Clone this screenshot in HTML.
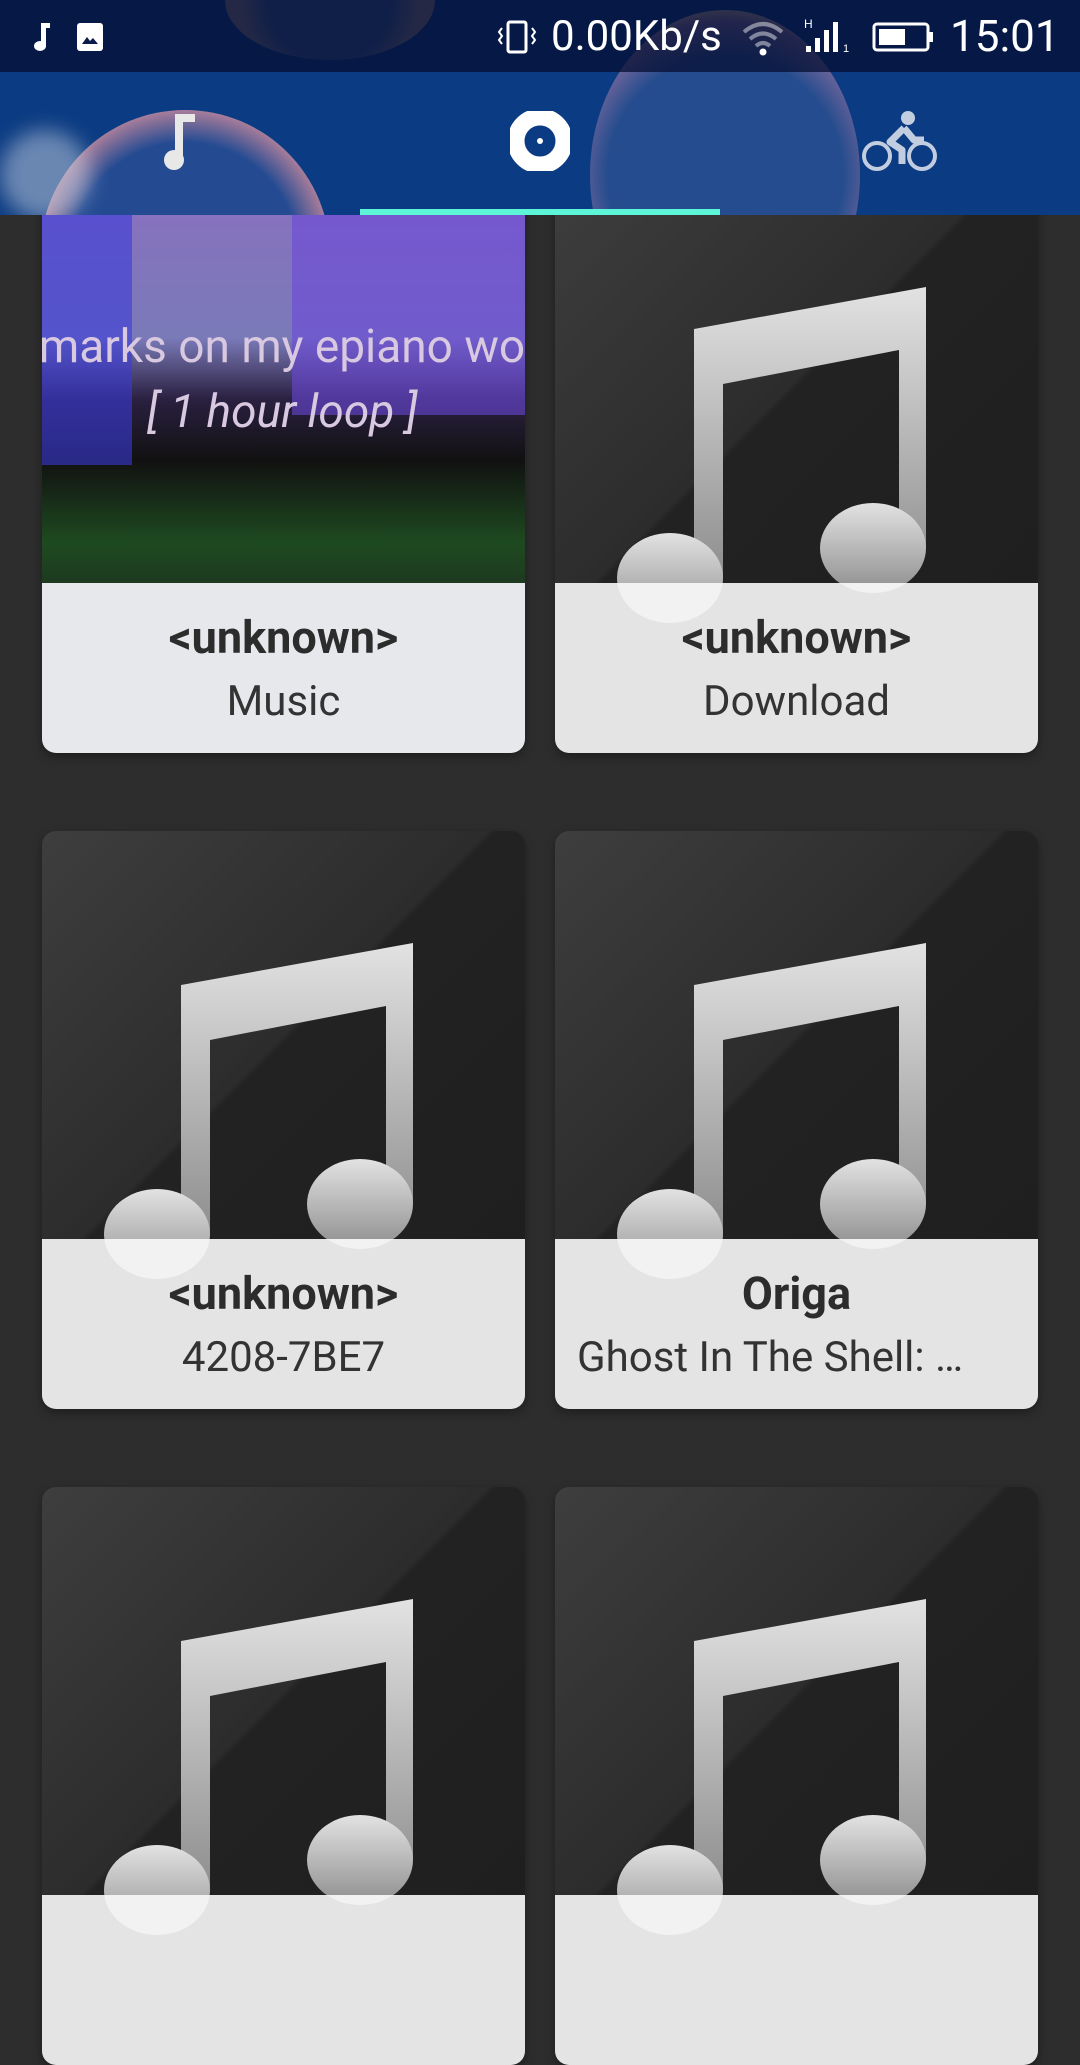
<!DOCTYPE html>
<html><head><meta charset="utf-8"><style>
*{margin:0;padding:0;box-sizing:border-box}
body{width:1080px;height:1920px;overflow:hidden;background:#2d2d2d;font-family:"Roboto","Liberation Sans",sans-serif;position:relative}
.hdr{position:absolute;left:0;top:0;width:1080px;height:215px;background:#0b3b82;overflow:hidden;z-index:5}
.sb{position:absolute;left:0;top:0;width:1080px;height:72px;background:rgba(5,15,50,0.75)}
.card{position:absolute;width:483px;height:578px;border-radius:14px;overflow:hidden;box-shadow:0 4px 10px rgba(0,0,0,.35)}
.img{position:absolute;left:0;top:0;width:483px;height:408px;background:linear-gradient(135deg,#3e3e3e 0%,#2c2c2c 50%,#222 51%,#1f1f1f 100%)}
.txt{position:absolute;left:0;top:408px;width:483px;height:170px;background:#e4e4e4}
.t1{position:absolute;left:0;width:483px;top:28px;text-align:center;font-weight:bold;font-size:45px;color:#2c2c2c}
.t2{position:absolute;left:0;width:483px;top:94px;text-align:center;font-size:42px;color:#333}
.note{position:absolute;left:0;top:0}
</style></head><body>
<div class="hdr">
 <div style="position:absolute;left:40px;top:110px;width:290px;height:290px;border-radius:50%;background:radial-gradient(circle,#2a4f96 55%,#c88aa0 70%,#e6c9b5 76%,#7b8bc0 85%);opacity:.8"></div>
 <div style="position:absolute;left:590px;top:10px;width:270px;height:330px;border-radius:50%;background:radial-gradient(circle,#284f90 55%,#8a6fa0 72%,#d8b59a 78%,#3a5a9a 86%);opacity:.85"></div>
 <div style="position:absolute;left:225px;top:-60px;width:210px;height:120px;border-radius:50%;background:radial-gradient(circle,#3a5a90 50%,#b89080 75%);opacity:.7"></div>
 <div style="position:absolute;left:0;top:130px;width:90px;height:90px;border-radius:50%;background:#c9d3e3;opacity:.5;filter:blur(10px)"></div>
 <div class="sb"></div>
 <svg style="position:absolute;left:30px;top:22px" width="24" height="30"><rect x="11" y="1" width="5" height="24" fill="#fff"/><rect x="11" y="1" width="9" height="5" fill="#fff"/><ellipse cx="10" cy="24" rx="6" ry="5" fill="#fff"/></svg>
 <svg style="position:absolute;left:76px;top:22px" width="28" height="30"><rect x="1" y="1" width="26" height="28" rx="3" fill="#fff"/><path d="M6 22 L11 15 L14 19 L17 16 L22 22 Z" fill="#0a1a4a"/></svg>
 <svg style="position:absolute;left:497px;top:20px" width="44" height="36"><rect x="11" y="2" width="18" height="30" rx="2" fill="none" stroke="#fff" stroke-width="3"/><path d="M5 8 l-3 4 3 4 -3 4 3 4 M35 8 l3 4 -3 4 3 4 -3 4" stroke="#fff" stroke-width="2" fill="none"/></svg>
 <div style="position:absolute;left:551px;top:12px;color:#fff;font-size:42px">0.00Kb/s</div>
 <svg style="position:absolute;left:740px;top:20px" width="46" height="36"><path d="M4 12 Q23 -4 42 12 M10 19 Q23 8 36 19 M16 26 Q23 20 30 26" stroke="rgba(255,255,255,.45)" stroke-width="4" fill="none"/><circle cx="23" cy="32" r="3.5" fill="#fff"/></svg>
 <svg style="position:absolute;left:804px;top:18px" width="50" height="36"><text x="0" y="10" fill="#fff" font-size="12" font-family="Liberation Sans">H</text><rect x="2" y="28" width="5" height="6" fill="#fff"/><rect x="11" y="20" width="5" height="14" fill="#fff"/><rect x="20" y="12" width="5" height="22" fill="#fff"/><rect x="29" y="4" width="5" height="30" fill="#fff"/><text x="39" y="34" fill="#fff" font-size="11" font-family="Liberation Sans">1</text></svg>
 <svg style="position:absolute;left:872px;top:22px" width="64" height="32"><rect x="2" y="2" width="54" height="26" rx="3" fill="none" stroke="#fff" stroke-width="3"/><rect x="7" y="7" width="26" height="16" fill="#fff"/><rect x="57" y="10" width="4" height="10" fill="#fff"/></svg>
 <div style="position:absolute;left:950px;top:10px;color:#fff;font-size:44px">15:01</div>
 <svg style="position:absolute;left:158px;top:112px" width="45" height="60"><rect x="17" y="2" width="8" height="50" fill="#e8e8e8"/><rect x="17" y="2" width="20" height="8" fill="#e8e8e8"/><ellipse cx="16" cy="48" rx="10" ry="10" fill="#e8e8e8"/></svg>
 <svg style="position:absolute;left:510px;top:111px" width="60" height="60"><circle cx="30" cy="30" r="24" fill="none" stroke="#fff" stroke-width="17"/><circle cx="30" cy="30" r="3" fill="#fff"/></svg>
 <svg style="position:absolute;left:862px;top:108px" width="76" height="70"><circle cx="46" cy="10" r="7" fill="#c2cde0"/><path d="M42 20 L28 34 L40 42 L40 56 M42 20 L52 32 L62 32" stroke="#c2cde0" stroke-width="7" fill="none" stroke-linejoin="round"/><circle cx="15" cy="48" r="13" fill="none" stroke="#c2cde0" stroke-width="4"/><circle cx="60" cy="48" r="13" fill="none" stroke="#c2cde0" stroke-width="4"/></svg>
 <div style="position:absolute;left:360px;top:209px;width:360px;height:6px;background:#5cf5d8"></div>
</div>

<div class="card" style="left:42px;top:175px">
 <div class="img" style="background:linear-gradient(180deg,#8a6fc0 0%,#7a7ab8 40%,#2a2040 55%,#111 70%,#1e4a20 90%,#1e3a20 100%)">
  <div style="position:absolute;left:0;top:0;width:90px;height:290px;background:#3a3ad8;opacity:.6"></div>
  <div style="position:absolute;left:250px;top:30px;width:233px;height:210px;background:#6a48d8;opacity:.6"></div>
  <div style="position:absolute;left:-10px;top:145px;width:500px;text-align:center;color:#d8c8e0;font-size:46px;white-space:nowrap">marks on my epiano wo</div>
  <div style="position:absolute;left:105px;top:210px;color:#d8c8e0;font-size:46px;font-style:italic">[ 1 hour loop ]</div>
 </div>
 <div class="txt" style="background:#e6e8ec"><div class="t1">&lt;unknown&gt;</div><div class="t2">Music</div></div>
</div>

<div class="card" style="left:555px;top:175px">
 <div class="img"></div><div class="txt"><div class="t1">&lt;unknown&gt;</div><div class="t2">Download</div></div>
 <svg class="note" width="483" height="578"><use href="#nt"/></svg>
</div>

<div class="card" style="left:42px;top:831px">
 <div class="img"></div><div class="txt"><div class="t1">&lt;unknown&gt;</div><div class="t2">4208-7BE7</div></div>
 <svg class="note" width="483" height="578"><use href="#nt"/></svg>
</div>
<div class="card" style="left:555px;top:831px">
 <div class="img"></div><div class="txt"><div class="t1">Origa</div><div class="t2" style="text-align:left;padding-left:22px">Ghost In The Shell: …</div></div>
 <svg class="note" width="483" height="578"><use href="#nt"/></svg>
</div>
<div class="card" style="left:42px;top:1487px">
 <div class="img"></div><div class="txt"></div>
 <svg class="note" width="483" height="578"><use href="#nt"/></svg>
</div>
<div class="card" style="left:555px;top:1487px">
 <div class="img"></div><div class="txt"></div>
 <svg class="note" width="483" height="578"><use href="#nt"/></svg>
</div>

<svg width="0" height="0" style="position:absolute">
 <defs>
  <linearGradient id="g" x1="0" y1="0" x2="0" y2="1"><stop offset="0" stop-color="#e2e2e2"/><stop offset="1" stop-color="#8e8e8e"/></linearGradient>
  <clipPath id="top"><rect x="0" y="0" width="483" height="408"/></clipPath>
  <clipPath id="bot"><rect x="0" y="408" width="483" height="170"/></clipPath>
  <g id="shape">
   <path d="M139 154 L371 112 L371 373 L344 373 L344 175 L168 209 L168 403 L139 403 Z"/>
   <ellipse cx="115" cy="403" rx="53" ry="45"/>
   <ellipse cx="318" cy="373" rx="53" ry="45"/>
  </g>
  <g id="nt">
   <use href="#shape" fill="url(#g)" clip-path="url(#top)"/>
   <use href="#shape" fill="#f2f2f2" clip-path="url(#bot)"/>
  </g>
 </defs>
</svg>
</body></html>
